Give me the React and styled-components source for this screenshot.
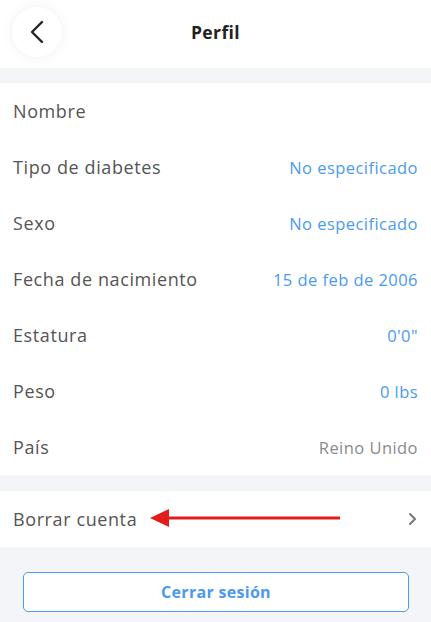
import React from 'react';
import styled, { createGlobalStyle } from 'styled-components';

const Global = createGlobalStyle`
  body {
    margin: 0;
    background: #f4f5f8;
    font-family: "Open Sans", "Noto Sans", sans-serif;
  }
`;

const Page = styled.div`
  width: 431px;
  min-height: 622px;
  background: #f4f5f8;
`;

const Header = styled.div`
  height: 68px;
  background: #fff;
  display: flex;
  align-items: center;
  justify-content: center;
  position: relative;
`;

const BackButton = styled.div`
  position: absolute;
  left: 12px;
  top: 7px;
  width: 50px;
  height: 50px;
  border-radius: 50%;
  background: #fff;
  box-shadow: 0 0 14px rgba(0, 0, 0, 0.06);
  display: flex;
  align-items: center;
  justify-content: center;
`;

const Title = styled.div`
  font-size: 17.5px;
  font-weight: 700;
  letter-spacing: 0.4px;
  color: #222;
  margin-top: -4px;
`;

const Section = styled.div`
  background: #fff;
  margin-top: ${p => p.gap}px;
`;

const Row = styled.div`
  height: 56px;
  display: flex;
  align-items: center;
  justify-content: space-between;
  padding: 0 13px;
  position: relative;
`;

const Label = styled.span`
  font-size: 18px;
  letter-spacing: 0.6px;
  color: #555;
`;

const Value = styled.span`
  font-size: 16.5px;
  letter-spacing: 0.45px;
  color: ${p => (p.muted ? '#8a8a8a' : '#4a9af0')};
`;

const Arrow = styled.svg`
  position: absolute;
  left: 150px;
  top: 17px;
`;

const Footer = styled.div`
  padding: 25px 22px 10px 23px;
`;

const LogoutButton = styled.button`
  width: 100%;
  height: 40px;
  background: #fff;
  border: 1.5px solid #4a9af0;
  border-radius: 5px;
  color: #4a9af0;
  font-family: inherit;
  font-size: 16px;
  font-weight: 700;
  letter-spacing: 0.3px;
`;

const rows = [
  ['Nombre', ''],
  ['Tipo de diabetes', 'No especificado'],
  ['Sexo', 'No especificado'],
  ['Fecha de nacimiento', '15 de feb de 2006'],
  ['Estatura', '0\'0"'],
  ['Peso', '0 lbs'],
  ['País', 'Reino Unido', true],
];

export default function App() {
  return (
    <Page>
      <Global />
      <Header>
        <BackButton>
          <svg width="16" height="24" viewBox="0 0 16 24">
            <path d="M13 2 L3 12 L13 22" fill="none" stroke="#222" strokeWidth="2.4" strokeLinecap="round" strokeLinejoin="round" />
          </svg>
        </BackButton>
        <Title>Perfil</Title>
      </Header>
      <Section gap={15}>
        {rows.map(([label, value, muted]) => (
          <Row key={label}>
            <Label>{label}</Label>
            <Value muted={muted}>{value}</Value>
          </Row>
        ))}
      </Section>
      <Section gap={16}>
        <Row>
          <Label>Borrar cuenta</Label>
          <Arrow width="192" height="22" viewBox="0 0 192 22">
            <path d="M0 10 L19 1 L19 19 Z" fill="#e31c1c" />
            <rect x="18" y="8.5" width="172" height="3" fill="#e31c1c" />
          </Arrow>
          <svg width="10" height="14" viewBox="0 0 10 14">
            <path d="M2 2 L7 7 L2 12" fill="none" stroke="#777" strokeWidth="2" strokeLinecap="round" strokeLinejoin="round" />
          </svg>
        </Row>
      </Section>
      <Footer>
        <LogoutButton>Cerrar sesión</LogoutButton>
      </Footer>
    </Page>
  );
}
